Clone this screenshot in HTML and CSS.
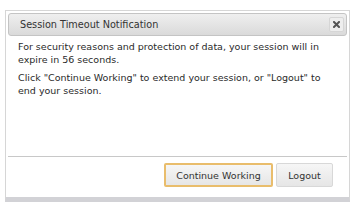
FILE: index.html
```html
<!DOCTYPE html>
<html>
<head>
<meta charset="utf-8">
<link rel="stylesheet" href="styles.css">
</head>
<body>
<div class="dialog">
  <div class="titlebar">
    <span class="title">Session Timeout Notification</span>
    <span class="close" aria-label="close">
      <svg width="7" height="7" viewBox="0 0 7 7"><path d="M1 1 L6 6 M6 1 L1 6" stroke="#555555" stroke-width="2" stroke-linecap="square"/></svg>
    </span>
  </div>
  <div class="content">
    <p>For security reasons and protection of data, your session will in expire in 56 seconds.</p>
    <p>Click "Continue Working" to extend your session, or "Logout" to end your session.</p>
  </div>
  <div class="buttonpane">
    <button class="btn btn-primary">Continue Working</button>
    <button class="btn btn-logout">Logout</button>
  </div>
</div>
</body>
</html>
```
FILE: styles.css
```css
html, body {
  margin: 0;
  padding: 0;
  background: #ffffff;
}
body {
  font-family: "DejaVu Sans", Verdana, sans-serif;
  color: #2a2a2a;
}
.dialog {
  margin: 10px 0 0 5px;
  width: 345px;
  height: 192px;
  box-sizing: border-box;
  border: 1px solid #d6d6d6;
  border-bottom: 5px solid #d2d2d6;
  padding: 2px 2px 0 2px;
  display: flex;
  flex-direction: column;
  background: #ffffff;
}
.titlebar {
  height: 23px;
  box-sizing: border-box;
  border: 1px solid #c4c4c4;
  border-radius: 3px;
  background: linear-gradient(#efefef, #dadada);
  display: flex;
  align-items: center;
  justify-content: space-between;
  padding: 0 2px 0 11px;
}
.title {
  font-size: 9.7px;
  color: #333333;
}
.close {
  width: 15px;
  height: 15px;
  box-sizing: border-box;
  border-radius: 2px;
  background: #eeeeee;
  border: 1px solid #d6d6d6;
  display: flex;
  align-items: center;
  justify-content: center;
}
.close svg { display: block; }
.content {
  flex: 1;
  padding: 4px 10px 0 10px;
  font-size: 9.5px;
  line-height: 13px;
}
.content p {
  margin: 0 0 5px 0;
}
.buttonpane {
  border-top: 1px solid #c8c8c8;
  display: flex;
  justify-content: flex-end;
  gap: 3px;
  padding: 6px 14px 10px 0;
}
.btn {
  font-family: "DejaVu Sans", Verdana, sans-serif;
  font-size: 9.5px;
  color: #333333;
  height: 24px;
  border: 1px solid #d8d8d8;
  border-radius: 2px;
  background: linear-gradient(#f6f6f6, #e6e6e6);
  padding: 0;
  margin: 0;
  white-space: nowrap;
}
.btn-primary {
  width: 109px;
  border: 2px solid #e9bd6c;
}
.btn-logout {
  width: 57px;
}
```
